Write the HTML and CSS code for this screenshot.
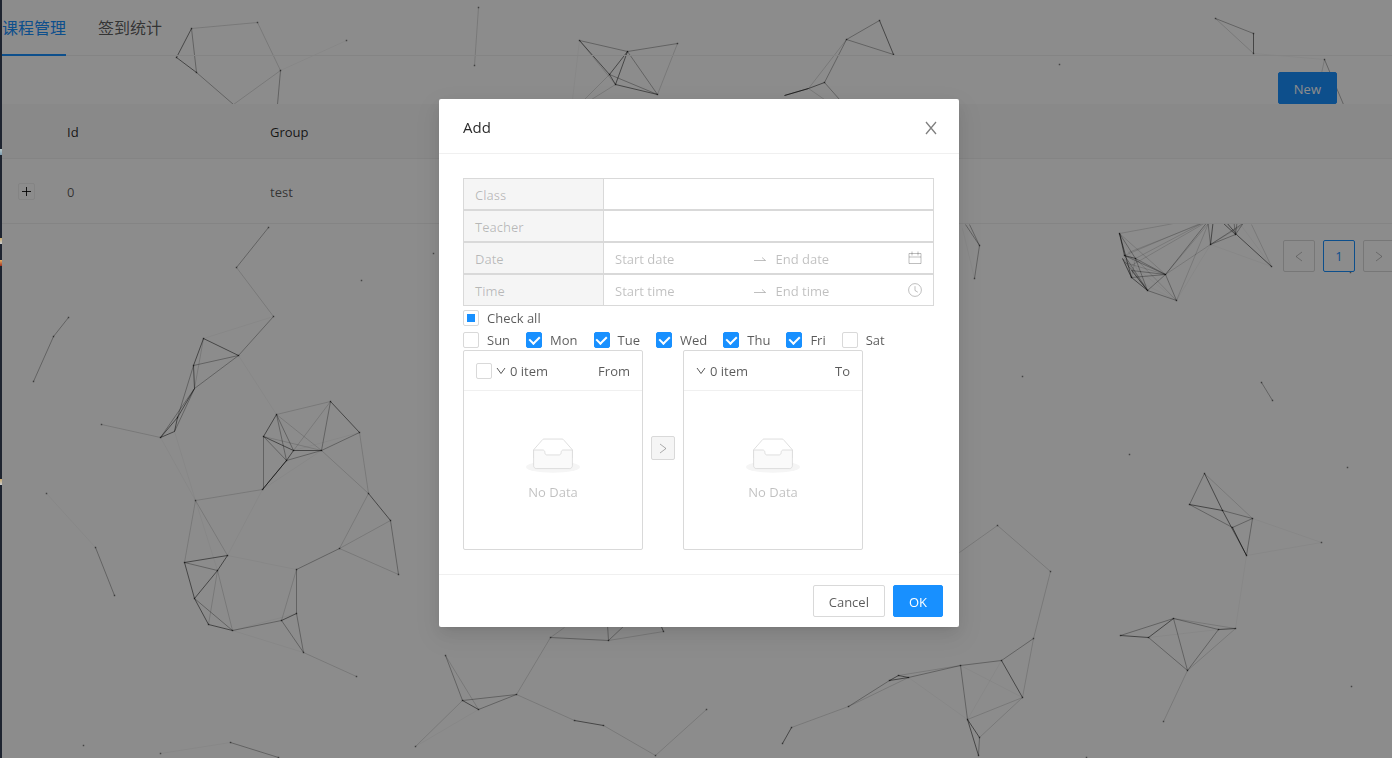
FILE: index.html
```
<!DOCTYPE html>
<html lang="zh">
<head>
<meta charset="utf-8">
<meta name="viewport" content="width=device-width, initial-scale=1">
<title>课程管理</title>
<link rel="stylesheet" href="styles.css">
</head>
<body>
<div class="edge" aria-hidden="true"></div>
<main class="page">
  <svg class="net" viewBox="0 0 1392 758" preserveAspectRatio="xMinYMin slice" aria-hidden="true">
    <g transform="translate(.5 .5)">
    <path class="strong" d="M191 28L176 57L196 72M203 338L238 355M203 338L193 365L194 388L177 417L160 437L174 431L177 417M330 401L359 432M276 414L263 436L293 450L321 450M293 450L286 460L262 489M286 460L262 489M368 493L390 520M184 562L227 555L217 570L194 598L184 562M194 598L208 624L232 630M281 620L296 613M579 40L609 74L627 51L615 84L609 74M615 84L657 94M879 20L893 54M824 82L808 88L784 95M808 88L784 95M1253 33V53M1204 473L1222 510L1246 555M1232 527L1246 555M1189 504L1222 510M1001 660L1022 697M967 719L979 737M967 719L978 755M1120 635L1148 637L1173 618M1218 629L1235 628M462 700L478 709M574 720L603 725M782 743L791 727M889 680L898 675L908 677L889 680M663 631L660 624"/>
    <path class="medium" d="M191 28L196 72L233 104M280 70L277 104M268 227L236 267M273 316L238 355L193 365M68 317L53 336L33 381M194 388L238 355M193 365L177 417M194 388L160 437M194 388L174 431M359 432L321 450L286 460L263 436V489M276 414L293 450M276 414L286 460M330 401L321 450M390 520L398 574M339 548L296 569V613L303 652L281 620L232 630M184 562L217 570M194 598L232 630M95 547L114 595M230 742L278 757M579 40L627 51L677 43M627 51L657 94L609 74M879 20L846 39L893 54M846 39L824 82L839 99M1215 18L1253 33M1324 59L1343 104M965 224L979 245L969 224M979 245L974 278M1261 382L1272 400M1204 473L1189 504L1232 527L1252 518L1222 510M1252 518L1246 555M1033 638L1001 660L960 665L967 719M979 737L978 755M1120 635L1173 618L1218 629L1187 670L1148 637M1173 618L1187 670M445 655L462 700L516 694L478 709M550 637L608 640L607 624M608 640L625 624M848 706L889 680M908 677L960 665"/>
    <path class="weak" d="M191 28L257 22L280 70M478 7L474 65M1187 670L1163 721M233 104L280 70M236 267L273 316M203 338L194 388M101 424L160 437M276 414L330 401L293 450M276 414L321 450L263 436M321 450L368 493L359 432M262 489L195 500L184 562M195 500L227 555M368 493L339 548L390 520M339 548L398 574M217 570L208 624M217 570L232 630M296 569L281 620M303 652L356 676M579 40L615 84M677 43L657 94M609 74L584 99M615 84L591 99M846 39L808 88L824 99M1215 18L1253 53M1324 59L1321 73M1204 473L1252 518M959 552L997 525L1050 571L1033 638L1022 697L967 719M1022 697L979 737M1173 618L1235 628L1187 670M445 655L478 709M516 694L550 637L564 627M608 640L663 631M516 694L574 720M603 725L655 755L706 709M791 727L848 706L908 677M898 675L960 665M462 700L415 746"/>
    <path class="faint" d="M280 70L346 40M203 338L273 316M160 437L195 500L174 431M238 355L276 414M262 489L321 450M359 432L293 450M262 489L227 555L296 569M217 570L195 500M232 630L296 613M46 493L95 547M160 753L230 742M579 40L572 99M1253 53L1324 59M962 228L974 278M1252 518L1321 542L1246 555L1235 628M960 665L1022 697M1001 660L967 719L908 677M1148 637L1218 629M478 709L415 746M232 630L303 652"/>
    <path class="strong" d="M1119 233L1124 255L1135 258M1122 258L1131 277L1147 290M1119 233L1131 277M1210 244L1213 218M1222 222L1235 234M1226 222L1237 235L1271 266"/>
    <path class="medium" d="M1119 233L1135 258L1147 290L1176 300L1165 274L1147 290L1122 258M1131 277L1165 274L1124 255L1147 290M1135 258L1165 274L1131 270L1147 290M1165 274L1208 220M1210 244L1207 218M1210 244L1235 234L1233 218M1210 244L1244 222M1235 234L1237 218M1235 234L1246 218"/>
    <path class="weak" d="M1119 233L1168 224L1207 216M1119 233L1165 274M1124 255L1202 222M1135 258L1207 220M1131 277L1135 258M1128 252L1204 222M1131 265L1207 221M1147 290L1124 258M1131 277L1124 262L1165 274L1212 218M1176 300L1210 218M1135 258L1176 300M1165 274L1210 244M1271 266L1251 224M1210 244L1240 226"/>
    <path class="faint" d="M1176 300L1210 244L1271 266M1119 233L1147 290M1176 300L1131 277M1124 258L1176 300M1271 266L1240 224"/>
    <path class="dots" d="M191 28h0M257 22h0M176 57h0M196 72h0M280 70h0M346 40h0M268 227h0M236 267h0M433 253h0M361 280h0M273 316h0M238 355h0M68 317h0M53 336h0M33 381h0M203 338h0M193 365h0M177 417h0M160 437h0M101 424h0M276 414h0M330 401h0M359 432h0M263 436h0M293 450h0M321 450h0M286 460h0M262 489h0M195 500h0M368 493h0M390 520h0M398 574h0M339 548h0M296 569h0M184 562h0M227 555h0M217 570h0M194 598h0M208 624h0M232 630h0M281 620h0M296 613h0M303 652h0M356 676h0M46 493h0M95 547h0M114 595h0M83 745h0M160 753h0M230 742h0M278 757h0M478 7h0M474 65h0M579 40h0M627 51h0M677 43h0M609 74h0M615 84h0M657 94h0M879 20h0M846 39h0M893 54h0M824 82h0M1215 18h0M1253 33h0M1253 53h0M1324 59h0M1059 64h0M979 245h0M974 278h0M1119 233h0M1124 255h0M1135 258h0M1131 277h0M1147 290h0M1165 274h0M1176 300h0M1210 244h0M1235 234h0M1271 266h0M1350 272h0M1022 376h0M1129 454h0M1347 467h0M1351 686h0M1086 757h0M1261 382h0M1272 400h0M1204 473h0M1189 504h0M1222 510h0M1252 518h0M1232 527h0M1246 555h0M1321 542h0M997 525h0M1050 571h0M1033 638h0M1001 660h0M960 665h0M1022 697h0M967 719h0M979 737h0M978 755h0M1120 635h0M1148 637h0M1173 618h0M1218 629h0M1235 628h0M1187 670h0M1163 721h0M445 655h0M462 700h0M478 709h0M516 694h0M550 637h0M608 640h0M663 631h0M574 720h0M603 725h0M655 755h0M706 709h0M782 743h0M791 727h0M848 706h0M889 680h0M898 675h0M908 677h0M415 746h0"/>
    </g>
  </svg>
  <nav class="tabs">
    <a class="tab tab-active" href="#course">课程管理</a>
    <a class="tab" href="#stats">签到统计</a>
  </nav>
  <div class="toolbar"><button class="btn btn-primary" type="button">New</button></div>
  <table class="grid">
    <colgroup><col class="col-expand"><col class="col-id"><col></colgroup>
    <thead><tr><th></th><th>Id</th><th>Group</th></tr></thead>
    <tbody><tr>
      <td><button class="expand" type="button" aria-label="Expand row"><svg width="11" height="11" viewBox="0 0 11 11"><path d="M5.500 1v9M1 5.500h9"/></svg></button></td>
      <td>0</td><td>test</td>
    </tr></tbody>
  </table>
  <nav class="pager" aria-label="Pagination">
    <button class="page-btn" type="button" aria-label="Previous"><svg width="10" height="12" viewBox="0 0 10 12"><path d="M8 2L2 6.500l6 4.500"/></svg></button>
    <button class="page-btn page-current" type="button">1</button>
    <button class="page-btn" type="button" aria-label="Next"><svg width="10" height="12" viewBox="0 0 10 12"><path d="M2 2l6 4.500L2 11"/></svg></button>
  </nav>
</main>

<div class="mask">
  <section class="modal" role="dialog" aria-modal="true" aria-labelledby="dialog-title">
    <header class="modal-head">
      <h1 class="modal-title" id="dialog-title">Add</h1>
      <button class="close" type="button" aria-label="Close"><svg width="12" height="14" viewBox="0 0 12 14"><path d="M1 1l10 12M11 1L1 13"/></svg></button>
    </header>
    <form class="modal-body">
      <div class="fields">
        <div class="field"><label class="addon" for="class">Class</label><div class="box"><input class="text" id="class" type="text"></div></div>
        <div class="field"><label class="addon" for="teacher">Teacher</label><div class="box"><input class="text" id="teacher" type="text"></div></div>
        <div class="field"><label class="addon" for="date">Date</label><div class="box">
          <input class="text" id="date" type="text" placeholder="Start date">
          <svg class="to" width="32" height="14" viewBox="0 0 32 14"><path d="M10 8.500h11.500l-3.500-3"/></svg>
          <input class="text" type="text" placeholder="End date" aria-label="End date">
          <svg class="suffix" width="14" height="14" viewBox="0 0 14 14"><path d="M1 2.500h12v10H1zM1 6h12M4 .5v4M10 .5v4"/></svg>
        </div></div>
        <div class="field"><label class="addon" for="time">Time</label><div class="box">
          <input class="text" id="time" type="text" placeholder="Start time">
          <svg class="to" width="32" height="14" viewBox="0 0 32 14"><path d="M10 8.500h11.500l-3.500-3"/></svg>
          <input class="text" type="text" placeholder="End time" aria-label="End time">
          <svg class="suffix" width="14" height="14" viewBox="0 0 14 14"><circle cx="7" cy="7" r="6.400"/><path d="M7 3.200v4.300l2.800 1.700"/></svg>
        </div></div>
      </div>
      <div class="checks"><label class="check"><input class="tick tick-partial" type="checkbox">Check all</label></div>
      <div class="checks">
        <label class="check"><input class="tick" type="checkbox">Sun</label>
        <label class="check"><input class="tick" type="checkbox" checked>Mon</label>
        <label class="check"><input class="tick" type="checkbox" checked>Tue</label>
        <label class="check"><input class="tick" type="checkbox" checked>Wed</label>
        <label class="check"><input class="tick" type="checkbox" checked>Thu</label>
        <label class="check"><input class="tick" type="checkbox" checked>Fri</label>
        <label class="check"><input class="tick" type="checkbox">Sat</label>
      </div>
      <div class="transfer">
        <div class="panel">
          <div class="panel-head">
            <input class="tick" type="checkbox" aria-label="Select all">
            <svg class="caret" width="10" height="10" viewBox="0 0 10 10"><path d="M1 2l4 5.500L9 2"/></svg>
            <span>0 item</span><span class="panel-title">From</span>
          </div>
          <div class="empty">
            <svg width="54" height="35" viewBox="0 0 64 41"><g transform="translate(0 1)"><ellipse class="floor" cx="32" cy="33" rx="32" ry="7"/><path class="lid" d="M55 12.760L44.854 1.258C44.367.474 43.656 0 42.907 0H21.093c-.749 0-1.460.474-1.947 1.257L9 12.761V22h46v-9.240z"/><path class="tray" d="M41.613 15.931c0-1.605.994-2.930 2.227-2.931H55v18.137C55 33.260 53.680 35 52.050 35h-40.100C10.320 35 9 33.259 9 31.137V13h11.160c1.233 0 2.227 1.323 2.227 2.928v.022c0 1.605 1.005 2.901 2.237 2.901h14.752c1.232 0 2.237-1.308 2.237-2.913v-.007z"/></g></svg>
            <span>No Data</span>
          </div>
        </div>
        <button class="move" type="button" aria-label="Move to target" disabled><svg width="10" height="12" viewBox="0 0 10 12"><path d="M2 2l6 4.500L2 11"/></svg></button>
        <div class="panel">
          <div class="panel-head">
            <svg class="caret" width="10" height="10" viewBox="0 0 10 10"><path d="M1 2l4 5.500L9 2"/></svg>
            <span>0 item</span><span class="panel-title">To</span>
          </div>
          <div class="empty">
            <svg width="54" height="35" viewBox="0 0 64 41"><g transform="translate(0 1)"><ellipse class="floor" cx="32" cy="33" rx="32" ry="7"/><path class="lid" d="M55 12.760L44.854 1.258C44.367.474 43.656 0 42.907 0H21.093c-.749 0-1.460.474-1.947 1.257L9 12.761V22h46v-9.240z"/><path class="tray" d="M41.613 15.931c0-1.605.994-2.930 2.227-2.931H55v18.137C55 33.260 53.680 35 52.050 35h-40.100C10.320 35 9 33.259 9 31.137V13h11.160c1.233 0 2.227 1.323 2.227 2.928v.022c0 1.605 1.005 2.901 2.237 2.901h14.752c1.232 0 2.237-1.308 2.237-2.913v-.007z"/></g></svg>
            <span>No Data</span>
          </div>
        </div>
      </div>
    </form>
    <footer class="modal-foot">
      <button class="btn" type="button">Cancel</button>
      <button class="btn btn-primary" type="button">OK</button>
    </footer>
  </section>
</div>
</body>
</html>
```
FILE: styles.css
```
* { box-sizing: border-box; }

body {
  margin: 0;
  font: 13px/22px "Open Sans", "Noto Sans CJK SC", sans-serif;
  color: rgba(0, 0, 0, .65);
  background: #fff;
}

button, input { font: inherit; color: inherit; }
svg { display: block; fill: none; stroke: currentColor; flex: none; }

/* Sliver of the neighbouring window along the left side */
.edge {
  position: fixed;
  inset: 0 auto 0 0;
  z-index: 3;
  width: 2px;
  background:
    linear-gradient(#b9c9c9, #7a9bb0) 0 149px / 2px 6px no-repeat,
    linear-gradient(#c9a86a, #c8ccd0) 0 238px / 2px 6px no-repeat,
    linear-gradient(#e8b060, #a03020) 0 260px / 2px 6px no-repeat,
    linear-gradient(#c9a86a, #c8ccd0) 0 479px / 2px 6px no-repeat,
    #1e2430;
}

.page {
  position: relative;
  min-height: 100vh;
  padding-left: 2px;
  overflow: hidden;
}

.net { position: absolute; inset: 0; width: 100%; height: 100%; }
.strong { stroke: rgba(0, 0, 0, .5); }
.medium { stroke: rgba(0, 0, 0, .3); }
.weak { stroke: rgba(0, 0, 0, .14); }
.faint { stroke: rgba(0, 0, 0, .04); }
.dots { stroke: rgba(0, 0, 0, .5); stroke-width: 1.500; stroke-linecap: square; }

.tabs {
  position: relative;
  display: flex;
  gap: 32px;
  height: 56px;
  border-bottom: 1px solid #f0f0f0;
  font-size: 16px;
}
.tab {
  height: 56px;
  line-height: 56px;
  color: inherit;
  text-decoration: none;
}
.tab-active { color: #1890ff; border-bottom: 2px solid #1890ff; }

.toolbar {
  position: relative;
  display: flex;
  justify-content: flex-end;
  padding: 16px 55px 0 0;
}

.btn {
  height: 32px;
  padding: 2px 15px 0;
  border: 1px solid #d9d9d9;
  border-radius: 2px;
  background: #fff;
}
.btn-primary { color: #fff; border-color: #1890ff; background: #1890ff; }

.grid {
  position: relative;
  width: 100%;
  table-layout: fixed;
  border-collapse: separate;
  border-spacing: 0;
  text-align: left;
}
.col-expand { width: 49px; }
.col-id { width: 203px; }
.grid th, .grid td { padding: 17px 16px 15px; border-bottom: 1px solid #f0f0f0; }
.grid th {
  height: 55px;
  font-weight: 400;
  color: rgba(0, 0, 0, .85);
  background: #fafafa;
}
.grid td { height: 65px; background: #fff; }
.grid td:first-child { padding-block: 16px; }
.expand {
  display: grid;
  place-items: center;
  width: 17px;
  height: 17px;
  padding: 0;
  border: 1px solid #f0f0f0;
  border-radius: 2px;
  background: #fff;
  color: rgba(0, 0, 0, .85);
}

.pager {
  position: relative;
  display: flex;
  justify-content: flex-end;
  gap: 8px;
  margin: 16px -3px 0 0;
}
.page-btn {
  display: grid;
  place-items: center;
  width: 32px;
  height: 32px;
  padding: 0;
  border: 1px solid #d9d9d9;
  border-radius: 2px;
  background: #fff;
  color: rgba(0, 0, 0, .25);
}
.page-current { color: #1890ff; border-color: #1890ff; }

.mask {
  position: fixed;
  inset: 0;
  z-index: 2;
  display: flex;
  justify-content: center;
  align-items: flex-start;
  padding: 99px 0 24px 6px;
  overflow: auto;
  background: rgba(0, 0, 0, .45);
}
.modal {
  width: 520px;
  max-width: 100%;
  background: #fff;
  border-radius: 2px;
  box-shadow: 0 3px 6px -4px rgba(0, 0, 0, .12), 0 6px 16px 0 rgba(0, 0, 0, .08), 0 9px 28px 8px rgba(0, 0, 0, .05);
}
.modal-head {
  display: flex;
  align-items: center;
  justify-content: space-between;
  padding: 17px 22px 15px 24px;
  border-bottom: 1px solid #f0f0f0;
}
.modal-title {
  margin: 0;
  font-size: 15px;
  line-height: 22px;
  font-weight: 400;
  color: rgba(0, 0, 0, .85);
}
.close {
  padding: 2px 0 0;
  border: 0;
  background: none;
  color: rgba(0, 0, 0, .5);
  stroke-width: 1.300;
}
.modal-body { padding: 24px; }
.fields { padding-right: 1px; }
.field { display: flex; height: 32px; }
.addon {
  flex: none;
  width: 140px;
  padding: 0 11px;
  line-height: 32px;
  border: 1px solid #d9d9d9;
  border-right: 0;
  background: #f5f5f5;
  color: rgba(0, 0, 0, .25);
}
.box {
  display: flex;
  flex: 1;
  align-items: center;
  min-width: 0;
  padding: 0 11px;
  border: 1px solid #d9d9d9;
  color: rgba(0, 0, 0, .25);
}
.text {
  flex: 1;
  min-width: 0;
  width: 0;
  padding: 2px 0 0;
  border: 0;
  outline: 0;
  background: none;
  color: rgba(0, 0, 0, .65);
}
.text::placeholder { color: rgba(0, 0, 0, .25); opacity: 1; }
.to { margin-top: 2px; }
.suffix { margin-left: 4px; }

.checks { display: flex; flex-wrap: wrap; gap: 16px; padding: 4px 0 2px; }
.check { display: flex; gap: 8px; align-items: center; line-height: 16px; }
.tick {
  appearance: none;
  display: grid;
  place-items: center;
  flex: none;
  width: 16px;
  height: 16px;
  margin: 0;
  border: 1px solid #d9d9d9;
  border-radius: 2px;
  background: #fff;
}
.tick:checked { border-color: #1890ff; background: #1890ff; }
.tick:checked::before {
  content: "";
  width: 5px;
  height: 8px;
  margin-bottom: 2px;
  border: solid #fff;
  border-width: 0 2px 2px 0;
  transform: rotate(45deg);
}
.tick-partial::before { content: ""; width: 8px; height: 8px; background: #1890ff; }

.transfer { display: flex; align-items: center; gap: 8px; }
.panel {
  display: flex;
  flex-direction: column;
  width: 180px;
  height: 200px;
  border: 1px solid #d9d9d9;
  border-radius: 2px;
}
.panel-head {
  display: flex;
  align-items: center;
  gap: 4px;
  height: 40px;
  padding: 0 12px;
  border-bottom: 1px solid #f0f0f0;
}
.panel-title { margin-left: auto; }
.empty {
  display: flex;
  flex: 1;
  flex-direction: column;
  align-items: center;
  justify-content: center;
  gap: 8px;
  color: rgba(0, 0, 0, .25);
}
.floor { fill: #f5f5f5; stroke: none; }
.lid { stroke: #d9d9d9; }
.tray { fill: #fafafa; stroke: #d9d9d9; }
.move {
  display: grid;
  place-items: center;
  width: 24px;
  height: 24px;
  padding: 0;
  margin-bottom: 4px;
  border: 1px solid #d9d9d9;
  border-radius: 2px;
  background: #f5f5f5;
  color: rgba(0, 0, 0, .3);
}

.modal-foot {
  display: flex;
  justify-content: flex-end;
  gap: 8px;
  padding: 10px 16px;
  border-top: 1px solid #f0f0f0;
}
```
